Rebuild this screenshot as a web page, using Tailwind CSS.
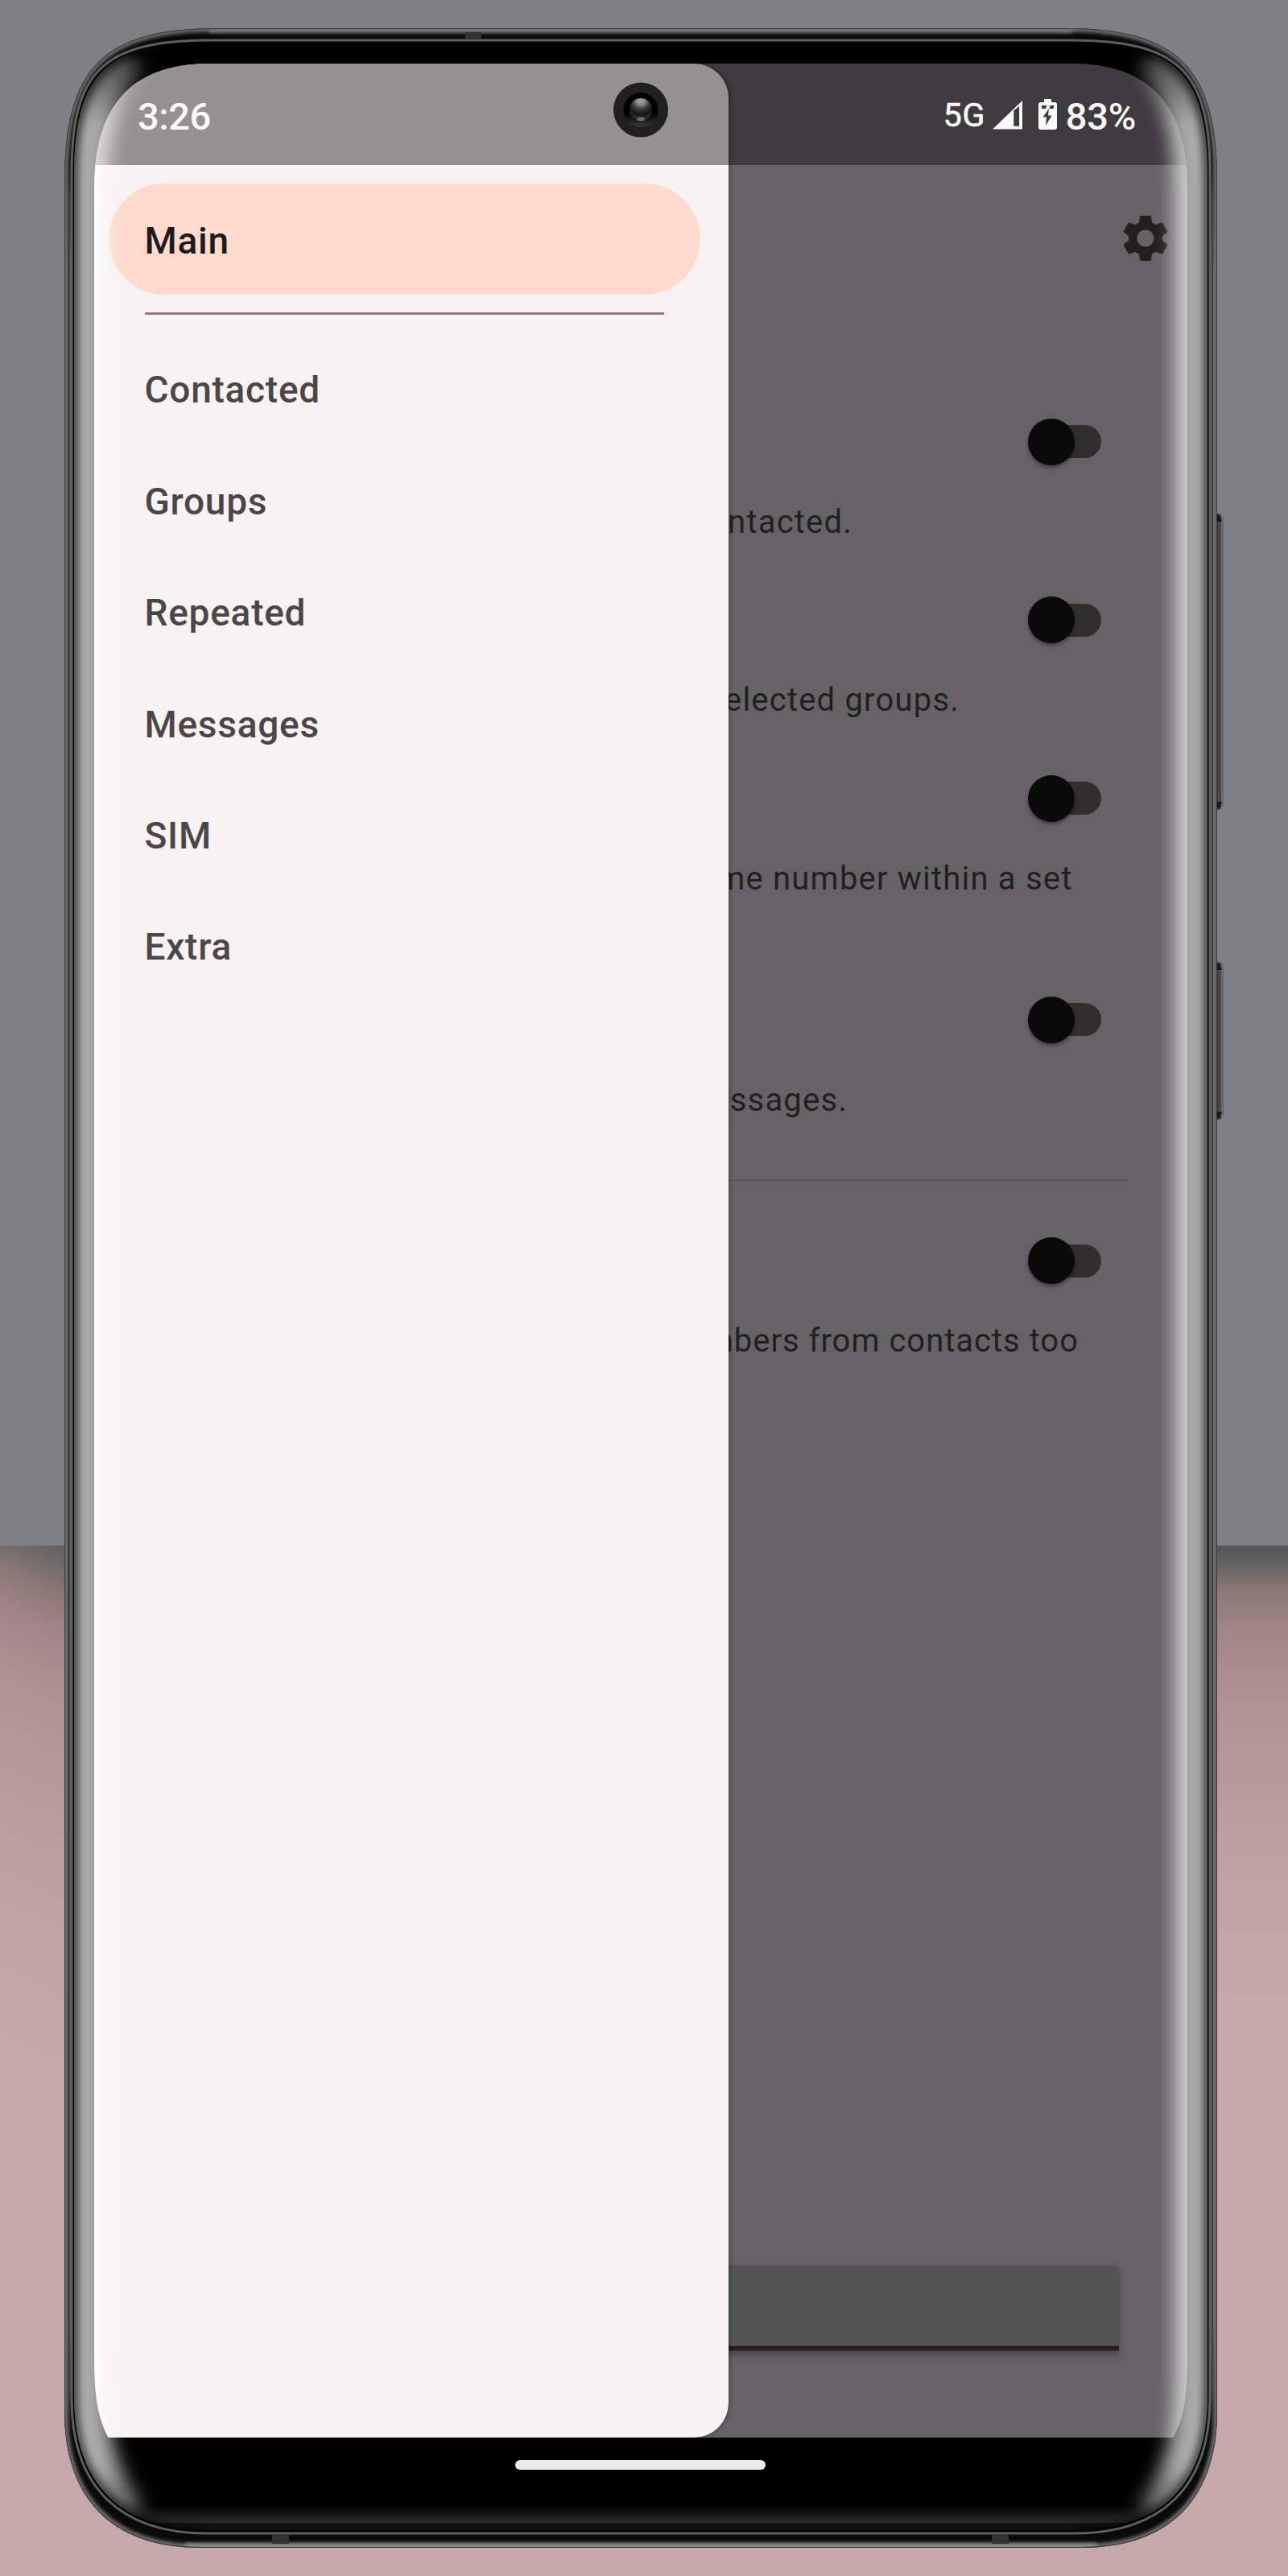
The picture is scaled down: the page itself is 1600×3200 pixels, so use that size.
<!DOCTYPE html>
<html lang="en">
<head>
<meta charset="utf-8">
<title>Navigation drawer</title>
<script src="https://cdn.jsdelivr.net/npm/@tailwindcss/browser@4"></script>
</head>
<body class="bg-[#7f8085] font-['Roboto',sans-serif]">
<div class="relative flex h-[3200px] w-[1600px] flex-col overflow-hidden">
  <!-- backdrop -->
  <div class="h-[1920px] bg-[#7f8085]"></div>
  <div class="flex flex-1 justify-between bg-[#c7a8aa]">
    <div class="h-[700px] w-[100px] bg-[linear-gradient(204deg,#5c5c5c_0px,#6b6867_25px,#8a7876_65px,#a28588_110px,#b09294_190px,#b99a9c_290px,#c1a2a4_430px,#c7a8aa_600px)]"></div>
    <div class="h-[700px] w-[120px] bg-[linear-gradient(180deg,#555_0px,#626161_20px,#8a7776_55px,#a28587_105px,#af9194_180px,#b7989b_280px,#c1a2a4_400px,#c7a8aa_560px)]"></div>
  </div>

  <!-- phone body -->
  <svg class="absolute inset-0" width="1600" height="3200" viewBox="0 0 1600 3200" fill="none">
    <defs>
      <path id="outer" d="M80 225C80 84 129 35 270 35H1322C1463 35 1512 84 1512 225V2995C1512 3105 1452 3165 1342 3165H250C140 3165 80 3105 80 2995Z"/>
      <path id="line" d="M89 215C89 89 128 50 262 50H1330C1464 50 1503 89 1503 215V2980C1503 3090 1442 3147 1335 3147H257C150 3147 89 3090 89 2980Z"/>
      <path id="glass" d="M92 218C92 91 131 53 262 53H1330C1461 53 1500 91 1500 218V2978C1500 3087 1440 3144 1333 3144H259C152 3144 92 3087 92 2978Z"/>
      <clipPath id="outerClip"><use href="#outer"/></clipPath>
      <clipPath id="glassClip"><use href="#glass"/></clipPath>
      <filter id="b2" filterUnits="userSpaceOnUse" x="0" y="0" width="1600" height="3200"><feGaussianBlur stdDeviation="2"/></filter>
      <linearGradient id="chin" x1="0" y1="3112" x2="0" y2="3134" gradientUnits="userSpaceOnUse"><stop stop-color="#000"/><stop offset="1" stop-color="#2c2b29"/></linearGradient>
      <linearGradient id="btn" x1="1511" y1="0" x2="1520" y2="0" gradientUnits="userSpaceOnUse"><stop stop-color="#2e2c2c"/><stop offset=".3" stop-color="#4d4949"/><stop offset=".65" stop-color="#4d4949"/><stop offset=".78" stop-color="#8e8a8a"/><stop offset=".9" stop-color="#4a4747"/></linearGradient>
      <linearGradient id="side" x1="0" y1="200" x2="0" y2="3020" gradientUnits="userSpaceOnUse"><stop stop-color="#6a6969" stop-opacity="0"/><stop offset=".05" stop-color="#6a6969"/><stop offset=".95" stop-color="#6a6969"/><stop offset="1" stop-color="#6a6969" stop-opacity="0"/></linearGradient>
    </defs>
    <rect x="1505" y="638" width="14.500" height="368" rx="6" fill="url(#btn)"/>
    <rect x="1505" y="1195" width="14.500" height="196" rx="6" fill="url(#btn)"/>
    <path d="M1512 640h3l3 8h-6zM1512 1004h3l3-8h-6zM1512 1197h3l3 8h-6zM1512 1389h3l3-8h-6z" fill="#1a1919"/>
    <use href="#outer" fill="#0a0a0a"/>
    <g clip-path="url(#outerClip)">
      <use href="#outer" stroke="#6f6e6e" stroke-width="9" filter="url(#b2)"/>
      <path d="M260 37H1332" stroke="#777" stroke-width="7" filter="url(#b2)"/>
      <path d="M230 3164H1362" stroke="#888" stroke-width="10" filter="url(#b2)"/>
      <use href="#outer" stroke="#3c3c3c" stroke-width="2"/>
      <rect x="81" y="200" width="8" height="2820" fill="url(#side)"/>
      <rect x="84" y="240" width="3" height="2740" fill="#424141"/>
      <rect x="1503" y="200" width="8" height="2820" fill="url(#side)"/>
      <rect x="1505" y="240" width="2" height="2740" fill="#424141"/>
    </g>
    <rect x="578" y="40" width="20" height="8" fill="#333"/>
    <rect x="338" y="3149" width="21" height="11" fill="#333"/>
    <rect x="1232" y="3149" width="21" height="11" fill="#333"/>
    <use href="#line" fill="#000" stroke="#5f5e5e" stroke-width="3"/>
    <use href="#glass" fill="#000"/>
    <g clip-path="url(#glassClip)">
      <rect x="92" y="3112" width="1408" height="22" fill="url(#chin)"/>
      <rect x="92" y="3134" width="1408" height="12" fill="#121211"/>
      <use href="#glass" stroke="#000" stroke-width="2"/>
    </g>
    <clipPath id="screenClip"><path d="M0 156C0 49 49 0 145 0H1213C1309 0 1358 49 1358 156V2849C1358 2895 1354 2924 1340.500 2949H17.500C4 2924 0 2895 0 2849Z"/></clipPath>
  </svg>

  <!-- screen -->
  <div class="absolute left-[117px] top-[79px] h-[2949px] w-[1358px] overflow-hidden bg-[#666366] [clip-path:url(#screenClip)]">
    <main class="flex h-full flex-col text-[40px] leading-[52px] tracking-[1.2px] text-[#21201f]">
      <div class="flex h-[440.8px] shrink-0 justify-end pr-[17px] pt-[182px]">
        <svg class="size-[70px]" viewBox="0 0 24 24" fill="#21201f"><path d="M19.140 12.940c.04-.3.06-.61.06-.94 0-.32-.02-.64-.07-.94l2.030-1.580c.18-.14.23-.41.12-.61l-1.920-3.320c-.12-.22-.37-.29-.59-.22l-2.390.96c-.5-.38-1.030-.7-1.620-.94L14.400 2.810c-.04-.24-.24-.41-.48-.41h-3.840c-.24 0-.43.17-.47.41L9.250 5.350C8.660 5.590 8.120 5.920 7.630 6.290L5.240 5.330c-.22-.08-.47 0-.59.22L2.740 8.870c-.12.21-.08.47.12.61l2.030 1.580C4.840 11.360 4.800 11.690 4.800 12s.02.64.07.94l-2.030 1.580c-.18.14-.23.41-.12.61l1.920 3.320c.12.22.37.29.59.22l2.390-.96c.5.38 1.030.7 1.620.94l.36 2.540c.05.24.24.41.48.41h3.840c.24 0 .44-.17.47-.41l.36-2.540c.59-.24 1.130-.56 1.620-.94l2.390.96c.22.08.47 0 .59-.22l1.920-3.320c.12-.22.07-.47-.12-.61L19.140 12.940zM12 15.600c-1.980 0-3.600-1.620-3.600-3.600s1.620-3.600 3.600-3.600 3.600 1.620 3.600 3.600-1.620 3.600-3.600 3.600z"/></svg>
      </div>
      <section class="flex h-[221.4px] shrink-0 flex-col items-end gap-[45px]">
        <div class="mr-[107.500px] grid h-[58px] w-[91px] items-center"><i class="h-[41px] w-[82px] justify-self-end rounded-full bg-[#302f2e] [grid-area:1/1]"></i><i class="size-[58px] rounded-full bg-[#0a0a0a] shadow-[0_3px_4px_#0006] [grid-area:1/1]"></i></div>
        <p class="whitespace-nowrap pr-[416px]">contacted.</p>
      </section>
      <section class="flex h-[221.4px] shrink-0 flex-col items-end gap-[45px]">
        <div class="mr-[107.500px] grid h-[58px] w-[91px] items-center"><i class="h-[41px] w-[82px] justify-self-end rounded-full bg-[#302f2e] [grid-area:1/1]"></i><i class="size-[58px] rounded-full bg-[#0a0a0a] shadow-[0_3px_4px_#0006] [grid-area:1/1]"></i></div>
        <p class="whitespace-nowrap pr-[283px]">selected groups.</p>
      </section>
      <section class="flex h-[275px] shrink-0 flex-col items-end gap-[45px]">
        <div class="mr-[107.500px] grid h-[58px] w-[91px] items-center"><i class="h-[41px] w-[82px] justify-self-end rounded-full bg-[#302f2e] [grid-area:1/1]"></i><i class="size-[58px] rounded-full bg-[#0a0a0a] shadow-[0_3px_4px_#0006] [grid-area:1/1]"></i></div>
        <p class="whitespace-nowrap pr-[142.500px]">same number within a set</p>
      </section>
      <section class="flex h-[227.8px] shrink-0 flex-col items-end gap-[45px]">
        <div class="mr-[107.500px] grid h-[58px] w-[91px] items-center"><i class="h-[41px] w-[82px] justify-self-end rounded-full bg-[#302f2e] [grid-area:1/1]"></i><i class="size-[58px] rounded-full bg-[#0a0a0a] shadow-[0_3px_4px_#0006] [grid-area:1/1]"></i></div>
        <p class="whitespace-nowrap pr-[422px]">messages.</p>
      </section>
      <hr class="mb-[68.8px] mr-[75px] h-[3px] shrink-0 border-0 bg-[#5a585a]">
      <section class="flex shrink-0 flex-col items-end gap-[45px]">
        <div class="mr-[107.500px] grid h-[58px] w-[91px] items-center"><i class="h-[41px] w-[82px] justify-self-end rounded-full bg-[#302f2e] [grid-area:1/1]"></i><i class="size-[58px] rounded-full bg-[#0a0a0a] shadow-[0_3px_4px_#0006] [grid-area:1/1]"></i></div>
        <p class="whitespace-nowrap pr-[135px] tracking-[1px]">numbers from contacts too</p>
      </section>
      <div class="mb-[108px] mr-[85px] mt-auto h-[106px] rounded-t-[6px] border-b-[6px] border-[#21201f] bg-[#545454] shadow-[0_5px_9px_#0005]"></div>
    </main>

    <!-- drawer -->
    <nav class="absolute inset-y-0 left-0 flex w-[788px] flex-col rounded-r-[43px] bg-[#f8f2f4] pl-[18px] pr-[35px] pt-[149px] text-[46px] font-medium tracking-[0.75px] text-[#4c4746] shadow-[2px_0_5px_#0004]">
      <a class="flex h-[138px] shrink-0 items-center rounded-full bg-[#ffdacd] pl-[44.500px] pt-[4px] text-[#1d1b1b]">Main</a>
      <hr class="mb-[24.800px] ml-[44.500px] mr-[45px] mt-[22px] h-[3px] shrink-0 border-0 bg-[#957a79]">
      <a class="flex h-[138.4px] items-center pl-[44.500px]">Contacted</a>
      <a class="flex h-[138.4px] items-center pl-[44.500px]">Groups</a>
      <a class="flex h-[138.4px] items-center pl-[44.500px]">Repeated</a>
      <a class="flex h-[138.4px] items-center pl-[44.500px]">Messages</a>
      <a class="flex h-[138.4px] items-center pl-[44.500px]">SIM</a>
      <a class="flex h-[138.4px] items-center pl-[44.500px]">Extra</a>
    </nav>

    <!-- status bar -->
    <header class="absolute inset-x-0 top-0 flex h-[125.5px] items-center justify-between bg-black/40 pl-[54px] pr-[64px] text-[47px] font-medium leading-none text-[#fcf9fa]">
      <span class="pt-[5px] tracking-[-0.4px]">3:26</span>
      <div class="flex items-center">
        <span class="mr-[9px] pt-[2px] text-[41.500px] font-normal tracking-[0.4px] [-webkit-text-stroke:0.5px_#fcf9fa]">5G</span>
        <svg class="mr-[20px] mt-[2px] h-[36px] w-[37px]" viewBox="0 0 38 38" preserveAspectRatio="none" fill="currentColor"><path fill-rule="evenodd" d="M0 37.500L38 0V37.500ZM27 13V33.500H34V7.500Z"/></svg>
        <svg class="mr-[11px] h-[38px] w-[23px]" viewBox="0 0 23 38" fill="currentColor"><path fill-rule="evenodd" d="M7 0h9v4h4q3 0 3 3v28q0 3-3 3H3q-3 0-3-3V7q0-3 3-3h4ZM4 8v4h5l1.500-4ZM14.500 8l-1 4H19V8ZM13 12L5.500 22.500H10L9 33l7.500-12.500H12Z"/></svg>
        <span class="pt-[5px] tracking-[-0.3px]">83%</span>
      </div>
    </header>
  </div>

  <!-- home indicator -->
  <div class="absolute left-[640px] top-[3056px] h-[12px] w-[311px] rounded-full bg-[#f1eaeb]"></div>

  <!-- camera and curved-glass reflections -->
  <svg class="pointer-events-none absolute inset-0" width="1600" height="3200" viewBox="0 0 1600 3200" fill="none">
    <defs>
      <filter id="b9" filterUnits="userSpaceOnUse" x="0" y="0" width="1600" height="3200"><feGaussianBlur stdDeviation="11"/></filter>
      <filter id="b5" filterUnits="userSpaceOnUse" x="0" y="0" width="1600" height="3200"><feGaussianBlur stdDeviation="5"/></filter>
      <linearGradient id="gloss" x1="0" y1="60" x2="0" y2="3140" gradientUnits="userSpaceOnUse"><stop stop-color="#fff" stop-opacity=".2"/><stop offset=".03" stop-color="#fff" stop-opacity=".67"/><stop offset=".975" stop-color="#fff" stop-opacity=".67"/><stop offset="1" stop-color="#fff" stop-opacity=".25"/></linearGradient>
      <radialGradient id="lens" cx=".5" cy=".12" r=".75"><stop stop-color="#93a0b8"/><stop offset=".22" stop-color="#8a8c92"/><stop offset=".5" stop-color="#3a3a3a"/><stop offset=".8" stop-color="#161614"/><stop offset="1" stop-color="#2a2a28"/></radialGradient>
      <linearGradient id="rim" x1="0" y1="0" x2="0" y2="1"><stop stop-color="#000"/><stop offset=".6" stop-color="#000"/><stop offset="1" stop-color="#3c3c3e"/></linearGradient>
      <clipPath id="band"><path d="M92 218C92 91 131 53 262 53H1330C1461 53 1500 91 1500 218V2978C1500 3087 1440 3144 1333 3144H259C152 3144 92 3087 92 2978Z"/></clipPath>
    </defs>
    <circle cx="796" cy="136.500" r="34" fill="#20201e"/>
    <circle cx="796" cy="136.500" r="21.500" fill="url(#rim)"/>
    <circle cx="796" cy="136" r="14" fill="url(#lens)"/>
    <ellipse cx="796" cy="148" rx="5" ry="2.500" fill="#6a6a6a"/>
    <g clip-path="url(#band)">
      <g stroke="url(#gloss)" stroke-width="52" filter="url(#b9)">
        <path d="M158 66C120 110 107 165 107 240V2950C107 3020 112 3070 158 3130"/>
        <path d="M1434 66C1472 110 1485 165 1485 240V2950C1485 3020 1480 3070 1434 3130"/>
      </g>
      <g stroke="#000" stroke-opacity=".55" stroke-width="10" filter="url(#b5)">
        <path d="M262 53C131 53 92 91 92 218V2978C92 3087 152 3144 259 3144"/>
        <path d="M1330 53C1461 53 1500 91 1500 218V2978C1500 3087 1440 3144 1333 3144"/>
      </g>
    </g>
  </svg>
</div>
</body>
</html>
